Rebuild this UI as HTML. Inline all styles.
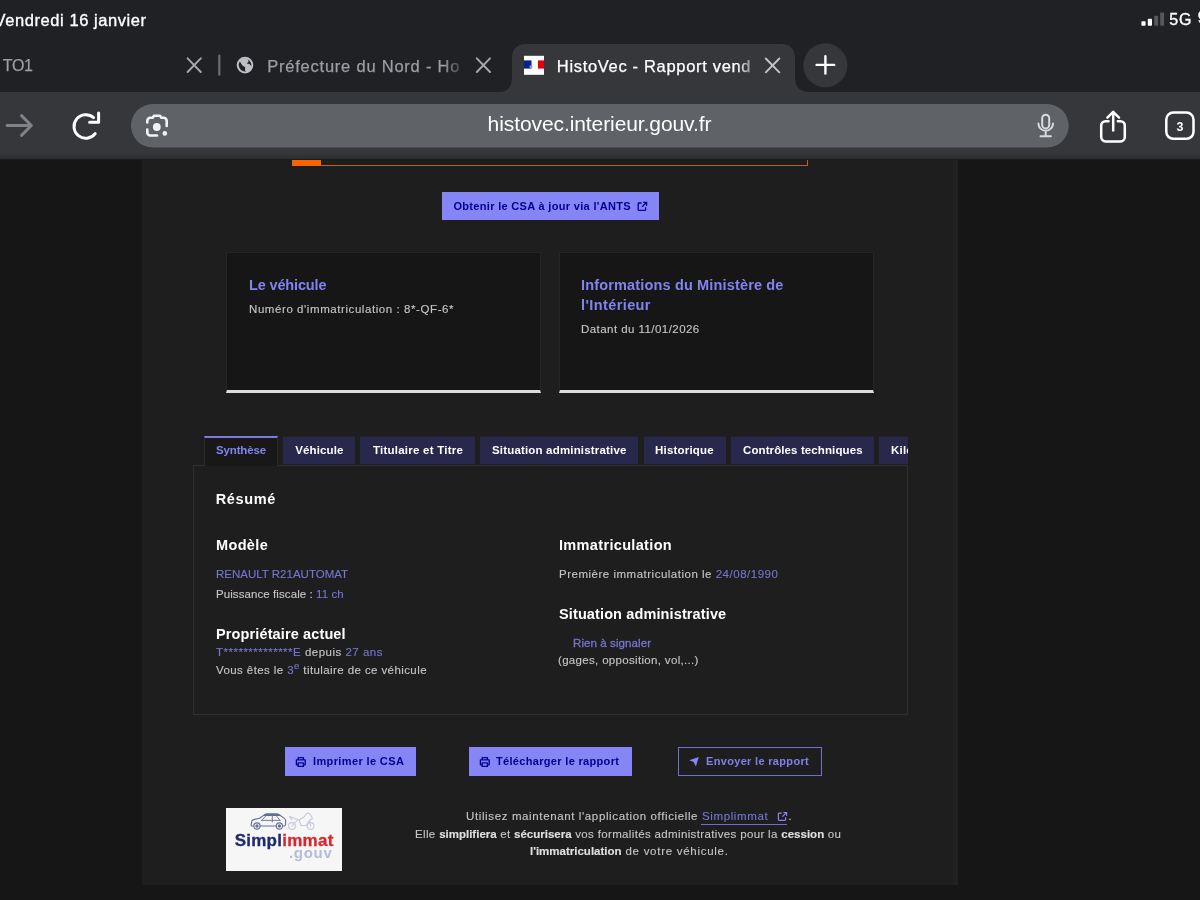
<!DOCTYPE html>
<html lang="fr">
<head>
<meta charset="utf-8">
<title>HistoVec - Rapport vendeur</title>
<style>
*{box-sizing:border-box;margin:0;padding:0}
html,body{width:1200px;height:900px;overflow:hidden;background:#161616}
body{position:relative;font-family:"Liberation Sans",sans-serif;color:#fff}
#shapes div,#shapes svg{position:absolute;display:block}
.t{position:absolute;white-space:nowrap;font-family:"Liberation Sans",sans-serif}
.t b{font-weight:bold;color:#e0e0e0;letter-spacing:0}
.bl{color:#7676d0}
.sup{font-size:9.5px;position:relative;top:-4.5px;line-height:0}
.card{background:#161616;border:1px solid #262626;border-bottom:3px solid #dddddd}
.tab{top:436px;height:28px;background:#27284c;border-top:1px solid #222234}
.btn{background:#8585f6}
#texts{position:absolute;left:0;top:0;width:1200px;height:900px;will-change:transform}
</style>

</head>
<body>
<div id="shapes">
<!-- browser chrome -->
<div style="left:0;top:0;width:1200px;height:92px;background:#202125"></div>
<div style="left:0;top:92px;width:1200px;height:67px;background:#36373b"></div>
<div style="left:0;top:153px;width:1200px;height:6px;background:linear-gradient(180deg,#36373b,#2c2d30)"></div>
<div style="left:0;top:159px;width:1200px;height:1px;background:#1b1b1c"></div>
<svg style="left:0;top:0" width="1200" height="160" viewBox="0 0 1200 160">
  <!-- active tab -->
  <path d="M499 92 C507 92 512 87 512 78 L512 58 C512 49 517 44 526 44 L781 44 C790 44 795 49 795 58 L795 78 C795 87 800 92 810 92 Z" fill="#36373b"/>
  <!-- plus button -->
  <circle cx="825.3" cy="65.3" r="22" fill="#36373b"/>
  <path d="M816.6 64.9 H834.2 M825.4 56.2 V73.6" stroke="#fff" stroke-width="2.4" stroke-linecap="round" fill="none"/>
  <!-- url bar -->
  <rect x="131" y="104" width="937.7" height="43.5" rx="21.75" fill="#5f6368"/>
  <!-- signal bars -->
  <rect x="1141.4" y="21.2" width="4.2" height="4.6" rx="0.8" fill="#fff"/>
  <rect x="1147.8" y="18.7" width="4.2" height="7.1" rx="0.8" fill="#fff"/>
  <rect x="1154.2" y="15.8" width="3.9" height="10" rx="0.8" fill="#56585c"/>
  <rect x="1160.2" y="12.5" width="3.9" height="13.3" rx="0.8" fill="#56585c"/>
  <!-- close X 1 -->
  <path d="M187.6 58.3 L200.8 72 M200.8 58.3 L187.6 72" stroke="#a7a9ae" stroke-width="1.9" stroke-linecap="round" fill="none"/>
  <!-- separator -->
  <rect x="218.2" y="54.5" width="2.2" height="21.3" rx="1" fill="#6c6e73"/>
  <!-- globe -->
  <circle cx="245" cy="65.1" r="7.3" fill="none" stroke="#bdbfc4" stroke-width="2"/>
  <path d="M239.6 60.4 L243.6 58.4 L247.8 59.2 L248.6 61.8 L246.6 63.4 L249.4 64 L251.6 66.4 L250.8 70 L247.6 72.4 L245 70.4 L245.2 67.2 L242.4 65.4 L240.6 62.8 Z" fill="#bdbfc4"/>
  <!-- close X 2 -->
  <path d="M476.8 58.3 L490 72 M490 58.3 L476.8 72" stroke="#a7a9ae" stroke-width="1.9" stroke-linecap="round" fill="none"/>
  <!-- favicon -->
  <rect x="524" y="55.8" width="20" height="19" fill="#fff"/>
  <rect x="524" y="60.4" width="7.5" height="8.2" fill="#0b1e8e"/>
  <rect x="538" y="60.4" width="6" height="8.2" fill="#e1000f"/>
  <circle cx="531" cy="66.8" r="1.6" fill="#8d9bd6"/>
  <!-- close X 3 -->
  <path d="M765.8 58.5 L779.3 72.3 M779.3 58.5 L765.8 72.3" stroke="#c2c4c8" stroke-width="1.9" stroke-linecap="round" fill="none"/>
  <!-- forward arrow -->
  <path d="M7 125.5 H31 M21.5 115.6 L31.4 125.5 L21.5 135.4" stroke="#808287" stroke-width="2.9" stroke-linecap="round" stroke-linejoin="round" fill="none"/>
  <!-- reload -->
  <path d="M93.6 117.6 A11.8 11.8 0 1 0 95.2 133.6" stroke="#fff" stroke-width="3" stroke-linecap="round" fill="none"/>
  <path d="M98.6 113 V122.2 H89.6" stroke="#fff" stroke-width="3" stroke-linecap="round" stroke-linejoin="round" fill="none"/>
  <!-- lens icon -->
  <path d="M147.3 122.5 V120.8 A3 3 0 0 1 150.3 117.8 H152.6 L154 115.7 H160 L161.4 117.8 H163.7 A3 3 0 0 1 166.7 120.8 V126" stroke="#f1f3f4" stroke-width="2.6" stroke-linecap="round" stroke-linejoin="round" fill="none"/>
  <path d="M147.3 129.5 V132.5 A3 3 0 0 0 150.3 135.5 H157" stroke="#f1f3f4" stroke-width="2.6" stroke-linecap="round" stroke-linejoin="round" fill="none"/>
  <circle cx="156.8" cy="127" r="3.9" fill="#f1f3f4"/>
  <circle cx="164.8" cy="133.4" r="2.3" fill="#f1f3f4"/>
  <!-- mic -->
  <rect x="1042.2" y="114.8" width="7" height="13.6" rx="3.5" fill="none" stroke="#d8dade" stroke-width="2"/>
  <path d="M1038.4 123.5 A7.3 7.3 0 0 0 1053 123.5 M1045.7 130.8 V136 M1040.5 136.3 H1050.9" stroke="#d8dade" stroke-width="2" stroke-linecap="round" fill="none"/>
  <!-- share -->
  <path d="M1108.5 121.2 H1105.6 A4.4 4.4 0 0 0 1101.2 125.6 V137 A4.4 4.4 0 0 0 1105.6 141.4 H1120.4 A4.4 4.4 0 0 0 1124.8 137 V125.6 A4.4 4.4 0 0 0 1120.4 121.2 H1117.8" stroke="#fff" stroke-width="2.5" stroke-linecap="round" fill="none"/>
  <path d="M1113.2 130.6 V112.2 M1107.4 117.6 L1113.2 111.8 L1119 117.6" stroke="#fff" stroke-width="2.5" stroke-linecap="round" stroke-linejoin="round" fill="none"/>
  <!-- tabs count -->
  <rect x="1166.3" y="112.6" width="27.2" height="26.2" rx="7" fill="none" stroke="#fff" stroke-width="2.5"/>
</svg>

<!-- page -->
<div style="left:142px;top:160px;width:816px;height:725px;background:#1e1e1e"></div>
<div style="left:953px;top:160px;width:5px;height:725px;background:#212121"></div>

<div style="left:292px;top:160px;width:516px;height:6px;border:1px solid #b8612f;border-top:0;border-left:0"></div>
<div style="left:292px;top:160px;width:29px;height:6px;background:#fa6206"></div>

<div class="btn" style="left:442px;top:192px;width:217px;height:28px"></div>
<svg style="left:637px;top:201px" width="11" height="11" viewBox="0 0 11 11"><path d="M4.6 2 H2 A0.8 0.8 0 0 0 1.2 2.8 V8.6 A0.8 0.8 0 0 0 2 9.4 H7.8 A0.8 0.8 0 0 0 8.6 8.6 V6.2 M6.2 1.3 H9.6 V4.7 M9.4 1.5 L5.2 5.7" stroke="#000091" stroke-width="1.3" fill="none"/></svg>

<div class="card" style="left:226px;top:252px;width:315px;height:141px"></div>
<div class="card" style="left:559px;top:252px;width:315px;height:141px"></div>

<!-- tabs -->
<div style="left:193px;top:465px;width:715px;height:250px;border:1px solid #2f2f2f"></div>
<div style="left:204px;top:436px;width:74px;height:30px;background:#181818;border:1px solid #2a2a2a;border-top:2px solid #7b7be0;border-bottom:0"></div>
<div class="tab" style="left:283px;width:72px"></div>
<div class="tab" style="left:360px;width:115px"></div>
<div class="tab" style="left:480px;width:158px"></div>
<div class="tab" style="left:644px;width:82px"></div>
<div class="tab" style="left:731px;width:143px"></div>
<div class="tab" style="left:879px;width:29px"></div>

<!-- bottom buttons -->
<div class="btn" style="left:285px;top:747px;width:131px;height:29px"></div>
<div class="btn" style="left:469px;top:747px;width:163px;height:29px"></div>
<div style="left:678px;top:747px;width:144px;height:29px;border:1px solid #7070d2"></div>

<!-- logo -->
<div style="left:226px;top:808px;width:116px;height:63px;background:#f6f6f6"></div>

<!-- link underline -->
<div style="left:701px;top:824px;width:86px;height:1px;background:#6e6ecc"></div>
<!-- button icons -->
<svg style="left:295px;top:756px" width="12" height="12" viewBox="0 0 12 12"><path d="M3.2 3.6 V1.6 H8.4 V3.6 M3.2 8.8 H1.4 V3.8 H10.2 V8.8 H8.4 M3.2 6.8 H8.4 V10.4 H3.2 Z" stroke="#000091" stroke-width="1.3" fill="none" stroke-linejoin="round"/></svg>
<svg style="left:479px;top:756px" width="12" height="12" viewBox="0 0 12 12"><path d="M3.2 3.6 V1.6 H8.4 V3.6 M3.2 8.8 H1.4 V3.8 H10.2 V8.8 H8.4 M3.2 6.8 H8.4 V10.4 H3.2 Z" stroke="#000091" stroke-width="1.3" fill="none" stroke-linejoin="round"/></svg>
<svg style="left:688px;top:755px" width="13" height="13" viewBox="0 0 13 13"><path d="M10.8 2 L1.2 5.3 L5.6 7.1 L7.9 11.5 Z" fill="#8585f6"/></svg>
<svg style="left:777px;top:811px" width="11" height="11" viewBox="0 0 11 11"><path d="M4.8 2.2 H2.2 A0.8 0.8 0 0 0 1.4 3 V8.6 A0.8 0.8 0 0 0 2.2 9.4 H7.8 A0.8 0.8 0 0 0 8.6 8.6 V6.2 M6.4 1.5 H9.6 V4.7 M9.4 1.7 L5.4 5.7" stroke="#8585f6" stroke-width="1.2" fill="none"/></svg>
<!-- logo drawing -->
<svg style="left:226px;top:808px;will-change:transform" width="116" height="63" viewBox="0 0 116 63">
  <!-- car -->
  <g stroke="#666e96" stroke-width="1.1" fill="none" stroke-linejoin="round" stroke-linecap="round">
    <path d="M27.5 18 H26 Q25 18 25.2 16.5 L25.8 13.2 Q26 12 27.6 11.6 L33.5 10.2 L38.6 6.6 Q39.6 5.9 41 5.9 H50.5 Q52 5.9 53.2 6.7 L58.4 10.4 Q59.6 11.2 59.6 12.6 V16.5 Q59.6 18 58.2 18 H56.8 M34.4 18 H50"/>
    <path d="M35.5 12.4 H54 M46.3 7 V14 M35.5 12.4 L39.8 8 M54 12.4 L51 8.5" stroke-width="0.9"/>
    <path d="M38.6 6.6 Q39.6 5.9 41 5.9 H50.5 Q52 5.9 53.2 6.7 L55 8 H37 Z" fill="#666e96" stroke="none"/>
    <circle cx="31" cy="18" r="3.1"/><circle cx="31" cy="18" r="1.1" fill="#666e96"/>
    <circle cx="53.4" cy="18" r="3.1"/><circle cx="53.4" cy="18" r="1.1" fill="#666e96"/>
  </g>
  <!-- moto -->
  <g stroke="#c4cade" stroke-width="1.1" fill="none" stroke-linejoin="round" stroke-linecap="round">
    <circle cx="66" cy="18" r="3.4"/><circle cx="84.6" cy="18" r="3.4"/>
    <path d="M63.5 8.5 L69 10.5 L73 12 L78 9 L80.5 5.5 Q83 4.5 84.5 6.5 L86.5 10.5 L83.5 12.5 L84.6 18 M66 18 L71.5 12 M73 12 L75 17.5 H80 L83.5 12.5 M63.5 8.5 L66 12"/>
  </g>
  <text x="8.7" y="37.6" font-family="'Liberation Sans',sans-serif" font-weight="bold" font-size="17" letter-spacing="0.25" fill="#1e2a70" stroke="#1e2a70" stroke-width="0.3">Simpl<tspan fill="#d8262e" stroke="#d8262e">immat</tspan></text>
  <text x="63" y="49.9" font-family="'Liberation Sans',sans-serif" font-weight="bold" font-size="15" letter-spacing="0.7" fill="#b3bddb">.gouv</text>
</svg>
</div>
<div id="texts">
<div class="t" id="date" style="left:-5.50px;top:9.75px;font-size:16.5px;line-height:21px;font-weight:normal;color:#fff;letter-spacing:0.574px;-webkit-text-stroke:0.35px #fff;">Vendredi 16 janvier</div>
<div class="t" id="g5" style="left:1169.20px;top:9.40px;font-size:16px;line-height:21px;font-weight:normal;color:#fff;letter-spacing:1.000px;-webkit-text-stroke:0.35px #fff;">5G</div>
<div class="t" id="to1" style="left:2.80px;top:55.30px;font-size:16px;line-height:21px;font-weight:normal;color:#9c9ea3;letter-spacing:-0.400px;-webkit-text-stroke:0.25px #9c9ea3;">TO1</div>
<div class="t" id="pref" style="left:267.20px;top:55.50px;font-size:16.5px;line-height:21px;font-weight:normal;color:#9c9ea3;letter-spacing:0.777px;-webkit-text-stroke:0.25px #9c9ea3;-webkit-mask-image:linear-gradient(90deg,#000 0,#000 176px,transparent 201px);mask-image:linear-gradient(90deg,#000 0,#000 176px,transparent 201px);">Préfecture du Nord - Ho</div>
<div class="t" id="histo" style="left:556.80px;top:55.60px;font-size:16.5px;line-height:21px;font-weight:normal;color:#fff;letter-spacing:0.677px;-webkit-text-stroke:0.25px #fff;-webkit-mask-image:linear-gradient(90deg,#000 0,#000 180px,transparent 204px);mask-image:linear-gradient(90deg,#000 0,#000 180px,transparent 204px);">HistoVec - Rapport vend</div>
<div class="t" id="url" style="left:487.60px;top:110.40px;font-size:21px;line-height:27px;font-weight:normal;color:#fff;letter-spacing:-0.088px;">histovec.interieur.gouv.fr</div>
<div class="t" id="n3" style="left:1165px;width:30px;text-align:center;top:119.00px;font-size:12.5px;line-height:16px;font-weight:bold;color:#fff;">3</div>
<div class="t" id="csa" style="left:453.40px;top:198.60px;font-size:11px;line-height:14px;font-weight:bold;color:#000091;letter-spacing:0.323px;">Obtenir le CSA à jour via l'ANTS</div>
<div class="t" id="vtit" style="left:249.00px;top:276.30px;font-size:14.5px;line-height:19px;font-weight:bold;color:#8383f0;letter-spacing:-0.150px;">Le véhicule</div>
<div class="t" id="vnum" style="left:249.00px;top:302.30px;font-size:11.5px;line-height:15px;font-weight:normal;color:#c6c6c6;letter-spacing:0.574px;-webkit-text-stroke-width:0.12px;">Numéro d'immatriculation : 8*-QF-6*</div>
<div class="t" id="mt1" style="left:581.00px;top:276.30px;font-size:14.5px;line-height:19px;font-weight:bold;color:#8383f0;letter-spacing:0.157px;">Informations du Ministère de</div>
<div class="t" id="mt2" style="left:581.00px;top:296.30px;font-size:14.5px;line-height:19px;font-weight:bold;color:#8383f0;letter-spacing:0.400px;">l'Intérieur</div>
<div class="t" id="mdat" style="left:581.00px;top:322.30px;font-size:11.5px;line-height:15px;font-weight:normal;color:#c6c6c6;letter-spacing:0.447px;-webkit-text-stroke-width:0.12px;">Datant du 11/01/2026</div>
<div class="t" id="tb1" style="left:216.00px;top:443.30px;font-size:11.5px;line-height:15px;font-weight:bold;color:#8383f0;letter-spacing:-0.143px;">Synthèse</div>
<div class="t" id="tb2" style="left:295.20px;top:443.30px;font-size:11.5px;line-height:15px;font-weight:bold;color:#fff;letter-spacing:0.143px;">Véhicule</div>
<div class="t" id="tb3" style="left:373.00px;top:443.30px;font-size:11.5px;line-height:15px;font-weight:bold;color:#fff;letter-spacing:0.235px;">Titulaire et Titre</div>
<div class="t" id="tb4" style="left:492.00px;top:443.30px;font-size:11.5px;line-height:15px;font-weight:bold;color:#fff;letter-spacing:0.174px;">Situation administrative</div>
<div class="t" id="tb5" style="left:655.00px;top:443.30px;font-size:11.5px;line-height:15px;font-weight:bold;color:#fff;letter-spacing:0.194px;">Historique</div>
<div class="t" id="tb6" style="left:743.00px;top:443.30px;font-size:11.5px;line-height:15px;font-weight:bold;color:#fff;letter-spacing:0.105px;">Contrôles techniques</div>
<div class="t" id="res" style="left:215.80px;top:490.20px;font-size:14.5px;line-height:19px;font-weight:bold;color:#fff;letter-spacing:0.600px;">Résumé</div>
<div class="t" id="mod" style="left:216.00px;top:535.55px;font-size:14.5px;line-height:19px;font-weight:bold;color:#fff;letter-spacing:0.350px;">Modèle</div>
<div class="t" id="ren" style="left:216.00px;top:567.30px;font-size:11.5px;line-height:15px;font-weight:normal;color:#7676d0;letter-spacing:0.000px;-webkit-text-stroke-width:0.12px;">RENAULT R21AUTOMAT</div>
<div class="t" id="pui" style="left:216.00px;top:587.30px;font-size:11.5px;line-height:15px;font-weight:normal;color:#c6c6c6;letter-spacing:0.083px;-webkit-text-stroke-width:0.12px;">Puissance fiscale : <span class="bl">11 ch</span></div>
<div class="t" id="pro" style="left:216.00px;top:624.75px;font-size:14.5px;line-height:19px;font-weight:bold;color:#fff;letter-spacing:0.125px;">Propriétaire actuel</div>
<div class="t" id="tli" style="left:216.00px;top:644.80px;font-size:11.5px;line-height:15px;font-weight:normal;color:#c6c6c6;letter-spacing:0.491px;-webkit-text-stroke-width:0.12px;"><span class="bl">T**************E</span> depuis <span class="bl">27 ans</span></div>
<div class="t" id="vou" style="left:216.00px;top:662.75px;font-size:11.5px;line-height:15px;font-weight:normal;color:#c6c6c6;letter-spacing:0.410px;-webkit-text-stroke-width:0.12px;">Vous êtes le <span class="bl">3<span class="sup">e</span></span> titulaire de ce véhicule</div>
<div class="t" id="imm" style="left:559.00px;top:535.55px;font-size:14.5px;line-height:19px;font-weight:bold;color:#fff;letter-spacing:0.339px;">Immatriculation</div>
<div class="t" id="pre" style="left:559.00px;top:567.30px;font-size:11.5px;line-height:15px;font-weight:normal;color:#c6c6c6;letter-spacing:0.507px;-webkit-text-stroke-width:0.12px;">Première immatriculation le <span class="bl">24/08/1990</span></div>
<div class="t" id="sit" style="left:559.00px;top:604.50px;font-size:14.5px;line-height:19px;font-weight:bold;color:#fff;letter-spacing:0.120px;">Situation administrative</div>
<div class="t" id="rie" style="left:573.00px;top:636.00px;font-size:11.5px;line-height:15px;font-weight:normal;color:#7676d0;letter-spacing:0.089px;-webkit-text-stroke:0.3px #7676d0;">Rien à signaler</div>
<div class="t" id="gag" style="left:558.00px;top:653.30px;font-size:11.5px;line-height:15px;font-weight:normal;color:#c6c6c6;letter-spacing:0.324px;-webkit-text-stroke-width:0.12px;">(gages, opposition, vol,...)</div>
<div class="t" id="b1" style="left:313.00px;top:754.30px;font-size:11px;line-height:14px;font-weight:bold;color:#000091;letter-spacing:0.375px;">Imprimer le CSA</div>
<div class="t" id="b2" style="left:496.00px;top:754.30px;font-size:11px;line-height:14px;font-weight:bold;color:#000091;letter-spacing:0.321px;">Télécharger le rapport</div>
<div class="t" id="b3" style="left:706.00px;top:754.30px;font-size:11px;line-height:14px;font-weight:bold;color:#8080ea;letter-spacing:0.324px;">Envoyer le rapport</div>
<div class="t" id="f1" style="left:466.00px;top:809.30px;font-size:11.5px;line-height:15px;font-weight:normal;color:#c6c6c6;letter-spacing:0.625px;-webkit-text-stroke-width:0.12px;">Utilisez maintenant l'application officielle <span class="bl">Simplimmat</span></div>
<div class="t" id="f1d" style="left:788.20px;top:809.30px;font-size:11.5px;line-height:15px;font-weight:normal;color:#c6c6c6;letter-spacing:0.000px;-webkit-text-stroke-width:0.12px;">.</div>
<div class="t" id="f2" style="left:415.00px;top:826.50px;font-size:11.5px;line-height:15px;font-weight:normal;color:#c6c6c6;letter-spacing:0.353px;-webkit-text-stroke-width:0.12px;">Elle <b>simplifiera</b> et <b>sécurisera</b> vos formalités administratives pour la <b>cession</b> ou</div>
<div class="t" id="f3" style="left:530.00px;top:843.70px;font-size:11.5px;line-height:15px;font-weight:normal;color:#c6c6c6;letter-spacing:0.722px;-webkit-text-stroke-width:0.12px;"><b>l'immatriculation</b> de votre véhicule.</div>
<div class="t" style="left:879px;top:436px;width:29px;height:28px;overflow:hidden"><span style="position:absolute;left:12.1px;top:7.3px;font-size:11.5px;line-height:15px;font-weight:bold;color:#fff;letter-spacing:0.15px">Kilométrage</span></div>
<div class="t" style="left:1197.7px;top:7.4px;font-size:16px;line-height:21px;color:#fff;-webkit-text-stroke:0.35px #fff">9</div>

</div>
</body>
</html>
